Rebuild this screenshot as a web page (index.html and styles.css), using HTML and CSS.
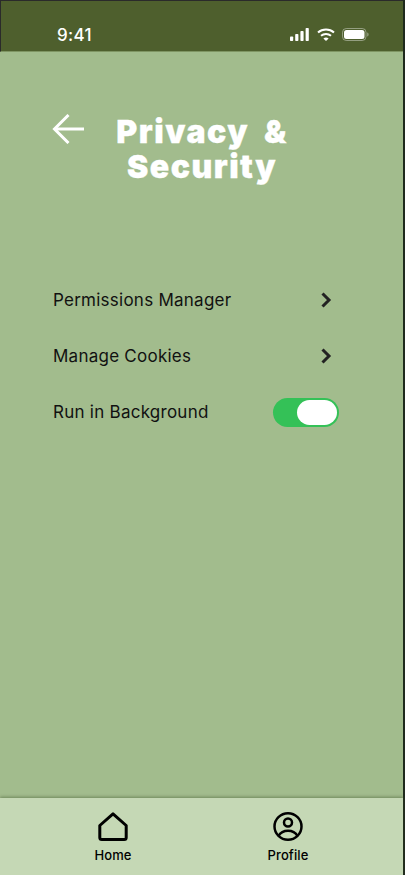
FILE: index.html
```html
<!DOCTYPE html>
<html lang="en">
<head>
    <meta charset="UTF-8">
    <meta name="viewport" content="width=device-width, initial-scale=1.0">
    <title>Privacy &amp; Security</title>
    <link rel="stylesheet" href="styles.css">
</head>
<body>
    <div class="phone">
        <div class="status-bar">
            <span class="time">9:41</span>
            <div class="status-icons">
                <svg width="20" height="13" viewBox="0 0 20 13" fill="#fff">
                    <rect x="0" y="8.5" width="3.2" height="4.5" rx="0.8"/>
                    <rect x="5.2" y="6" width="3.2" height="7" rx="0.8"/>
                    <rect x="10.4" y="3" width="3.2" height="10" rx="0.8"/>
                    <rect x="15.6" y="0" width="3.2" height="13" rx="0.8"/>
                </svg>
                <svg width="18" height="13" viewBox="0 0 18 13" fill="none" stroke="#fff" stroke-width="2">
                    <path d="M1 4.6C5.5 0.6 12.5 0.6 17 4.6"/>
                    <path d="M4 7.8C6.8 5.4 11.2 5.4 14 7.8"/>
                    <path d="M9 13L6.4 10.4C7.9 9.2 10.1 9.2 11.6 10.4Z" fill="#fff" stroke="none"/>
                </svg>
                <svg width="27" height="13" viewBox="0 0 27 13" fill="none">
                    <rect x="0.5" y="0.5" width="23.5" height="12" rx="3.8" stroke="#fff" stroke-opacity="0.4"/>
                    <rect x="2" y="2" width="20.5" height="9" rx="2.5" fill="#fff"/>
                    <path d="M25.2 4.5v4c0.9-0.3 1.4-1.1 1.4-2s-0.5-1.7-1.4-2Z" fill="#fff" fill-opacity="0.4"/>
                </svg>
            </div>
        </div>

        <div class="content">
            <div class="header">
                <svg class="back" width="32" height="30" viewBox="0 0 32 30" fill="none" stroke="#fff" stroke-width="3">
                    <path d="M32 15H3"/>
                    <path d="M16.5 1L2.5 15L16.5 29"/>
                </svg>
                <h1>Privacy &amp; Security</h1>
            </div>

            <div class="menu">
                <div class="row">
                    <span>Permissions Manager</span>
                    <svg class="chevron" width="12" height="16" viewBox="0 0 12 16" fill="none" stroke="#222" stroke-width="3">
                        <path d="M2.5 1.5L9 8L2.5 14.5"/>
                    </svg>
                </div>
                <div class="row">
                    <span>Manage Cookies</span>
                    <svg class="chevron" width="12" height="16" viewBox="0 0 12 16" fill="none" stroke="#222" stroke-width="3">
                        <path d="M2.5 1.5L9 8L2.5 14.5"/>
                    </svg>
                </div>
                <div class="row">
                    <span>Run in Background</span>
                    <div class="toggle"><div class="knob"></div></div>
                </div>
            </div>
        </div>

        <div class="tab-bar">
            <div class="tab">
                <svg width="30" height="29" viewBox="0 0 30 29" fill="none" stroke="#000" stroke-width="3" stroke-linejoin="round">
                    <path d="M15 1.8L28.2 13.5V25.5Q28.2 27.5 26.2 27.5H3.8Q1.8 27.5 1.8 25.5V13.5Z"/>
                </svg>
                <span>Home</span>
            </div>
            <div class="tab">
                <svg width="30" height="29" viewBox="0 0 30 29" fill="none" stroke="#000" stroke-width="2.5">
                    <ellipse cx="15" cy="14.5" rx="13.5" ry="13.2"/>
                    <circle cx="15" cy="10.5" r="4"/>
                    <path d="M5.5 24C7.5 20.5 11 18.8 15 18.8C19 18.8 22.5 20.5 24.5 24"/>
                </svg>
                <span>Profile</span>
            </div>
        </div>
    </div>
</body>
</html>
```

FILE: styles.css
```css
* {
    box-sizing: border-box;
}

body {
    margin: 0;
    background-color: #1f2a1d;
}

.phone {
    width: 403px;
    height: 875px;
    display: flex;
    flex-direction: column;
    background-color: #a2bc8d;
    font-family: Inter, sans-serif;
}

.status-bar {
    height: 52px;
    flex-shrink: 0;
    display: flex;
    justify-content: space-between;
    align-items: center;
    padding: 17px 34px 0 56px;
    background-color: #4e5f2d;
    border-top: 1px solid #2a2a2a;
    border-left: 1px solid #2a2a2a;
    border-bottom: 1px solid #7f9563;
    color: #fff;
}

.time {
    font-size: 17px;
    font-weight: 500;
    letter-spacing: 0.3px;
}

.status-icons {
    display: flex;
    align-items: center;
    gap: 7px;
}

.content {
    flex: 1;
    padding: 62px 52px 0;
}

.header {
    display: flex;
    align-items: flex-start;
    gap: 30px;
}

.back {
    flex-shrink: 0;
}

h1 {
    width: 176px;
    margin: 0;
    color: #fff;
    font-size: 32px;
    font-weight: 900;
    line-height: 35px;
    letter-spacing: 1.5px;
    word-spacing: 7px;
    text-align: center;
    -webkit-text-stroke: 0.3px #fff;
}

.menu {
    margin: 88px 0 0 1px;
    padding-right: 14px;
}

.row {
    height: 56px;
    display: flex;
    justify-content: space-between;
    align-items: center;
    font-size: 17px;
    letter-spacing: 0.25px;
    color: #111;
}

.chevron {
    margin-right: 5px;
}

.toggle {
    width: 66px;
    height: 29px;
    margin-right: -2px;
    padding: 2px;
    display: flex;
    justify-content: flex-end;
    border-radius: 15px;
    background-color: #34c157;
}

.knob {
    width: 40px;
    height: 25px;
    border-radius: 13px;
    background-color: #fff;
}

.tab-bar {
    height: 77px;
    flex-shrink: 0;
    display: flex;
    justify-content: space-between;
    padding: 14px 65px 0 63px;
    background-color: #c5d8b5;
    box-shadow: 0 -1px 3px rgba(60, 80, 40, 0.5);
}

.tab {
    width: 100px;
    display: flex;
    flex-direction: column;
    align-items: center;
    gap: 6px;
    font-size: 13px;
    font-weight: 500;
    letter-spacing: 0.1px;
    color: #000;
}
```
